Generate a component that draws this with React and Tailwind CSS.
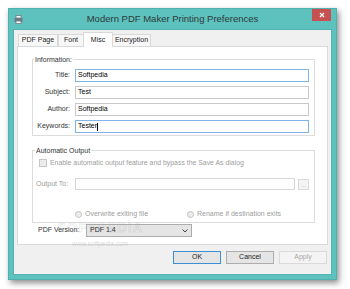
import React from "react";

function Printer() {
  return (
    <svg width="9" height="9" viewBox="0 0 9 9">
      <rect x="2" y="0.5" width="5" height="2.5" fill="#fff" stroke="#6d7b84" strokeWidth="0.8" />
      <rect x="0.5" y="3" width="8" height="4" fill="#6d7b84" />
      <rect x="2" y="6" width="5" height="2.5" fill="#fff" stroke="#6d7b84" strokeWidth="0.8" />
    </svg>
  );
}

function Row({ label, value, focus, caret }) {
  return (
    <div className="flex items-center h-[13px]">
      <div className="w-[36px] text-right text-[7px] text-[#333]">{label}</div>
      <div
        className={`ml-[5px] w-[234px] h-[13px] bg-white border flex items-center px-[2px] text-[7px] text-black ${
          focus ? "border-[#7eb4ea]" : "border-[#c9c9c9]"
        }`}
      >
        {value}
        {caret && <span className="inline-block w-px h-[8px] bg-black" />}
      </div>
    </div>
  );
}

function Radio({ label }) {
  return (
    <div className="flex items-center gap-[3px]">
      <span className="w-[7px] h-[7px] rounded-full border border-[#c3c3c3] bg-[#ececec]" />
      <span className="text-[7px] text-[#9d9d9d]">{label}</span>
    </div>
  );
}

function Button({ children, primary, disabled }) {
  return (
    <div
      className={`w-[48px] h-[13px] flex items-center justify-center text-[7px] border ${
        disabled
          ? "bg-[#f4f4f4] border-[#dadada] text-[#a8a8a8]"
          : primary
          ? "bg-[#e5e5e5] border-[#3c8fd6] text-[#222]"
          : "bg-[#e5e5e5] border-[#adadad] text-[#222]"
      }`}
    >
      {children}
    </div>
  );
}

export default function App() {
  const tabs = ["PDF Page", "Font", "Misc", "Encryption"];
  const widths = { "PDF Page": "w-[40px]", Font: "w-[26px]", Misc: "w-[30px]", Encryption: "w-[39px]" };

  return (
    <div className="w-[350px] h-[289px] bg-white overflow-hidden pt-[8px] pl-[8px] font-['Liberation_Sans',Arial,sans-serif]">
      <div className="w-[329px] h-[272px] bg-[#5dc1be] border border-[#4fb0ad] shadow-[2px_3px_6px_rgba(0,0,0,0.45)] flex flex-col">
        {/* title bar */}
        <div className="relative h-[20px] flex items-center pl-[5px] shrink-0">
          <Printer />
          <div className="absolute inset-x-0 top-[3px] text-center text-[9.5px] text-[#2d3a3a]">
            Modern PDF Maker Printing Preferences
          </div>
          <div className="absolute right-[5px] top-0 w-[19px] h-[12px] bg-[#c75050] flex items-center justify-center">
            <svg width="6" height="6" viewBox="0 0 6 6">
              <path d="M1 1 L5 5 M5 1 L1 5" stroke="#fff" strokeWidth="1.2" />
            </svg>
          </div>
        </div>

        {/* client */}
        <div className="mx-[4px] mb-[4px] flex-1 bg-[#f0f0f0] border border-[#52b3b0] flex flex-col pl-[3px] pt-[2px]">
          <div className="flex items-end h-[14px] pl-[1px] relative z-10">
            {tabs.map((t) => (
              <div
                key={t}
                className={`${widths[t]} flex items-center justify-center text-[7px] text-[#222] border border-[#d9d9d9] ${
                  t === "Misc"
                    ? "h-[15px] -mb-px bg-white border-b-0 -mx-[1px] px-[1px]"
                    : "h-[12px] bg-[#f7f7f7] border-b-0"
                }`}
              >
                {t}
              </div>
            ))}
          </div>

          <div className="relative w-[311px] h-[199px] bg-white border border-[#d9d9d9] pl-[14px] pt-[8px]">
            <fieldset className="w-[283px] border border-[#dcdcdc] pl-[1px] pb-[2px]">
              <legend className="px-[1px] text-[7px] text-[#333] leading-[9px]">Information:</legend>
              <div className="flex flex-col gap-[4px] mt-[5px]">
                <Row label="Title:" value="Softpedia" focus />
                <Row label="Subject:" value="Test" />
                <Row label="Author:" value="Softpedia" />
                <Row label="Keywords:" value="Tester" focus caret />
              </div>
            </fieldset>

            <fieldset className="mt-[10px] w-[283px] h-[77px] border border-[#dcdcdc] pl-[1px]">
              <legend className="ml-[1px] px-[1px] text-[7px] text-[#333] leading-[9px]">Automatic Output</legend>
              <div className="flex items-center gap-[3px] ml-[5px] mt-[3px]">
                <span className="w-[8px] h-[8px] border border-[#c6c6c6] bg-[#ececec]" />
                <span className="text-[6.9px] text-[#9d9d9d]">
                  Enable automatic output feature and bypass the Save As dialog
                </span>
              </div>
              <div className="flex items-center mt-[10px] h-[12px]">
                <div className="w-[36px] pl-[2px] text-[7px] text-[#9d9d9d]">Output To:</div>
                <div className="ml-[5px] w-[220px] h-[12px] bg-white border border-[#d9d9d9]" />
                <div className="ml-[3px] w-[11px] h-[11px] bg-[#f4f4f4] border border-[#d9d9d9] flex items-end justify-center text-[6px] leading-[7px] text-[#a0a0a0]">
                  ...
                </div>
              </div>
              <div className="flex items-center mt-[19px] pl-[41px]">
                <Radio label="Overwrite exiting file" />
                <div className="ml-[39px]">
                  <Radio label="Rename if destination exits" />
                </div>
              </div>
            </fieldset>

            <div className="flex items-center mt-[1px] h-[13px]">
              <div className="ml-[6px] w-[48px] text-[7px] text-[#333]">PDF Version:</div>
              <div className="w-[106px] h-[13px] bg-[#e5e5e5] border border-[#acacac] flex items-center justify-between px-[3px] text-[7px] text-[#222]">
                <span>PDF 1.4</span>
                <svg width="6" height="4" viewBox="0 0 6 4">
                  <path d="M0.5 0.5 L3 3 L5.5 0.5" stroke="#444" strokeWidth="1" fill="none" />
                </svg>
              </div>
            </div>

            {/* watermark */}
            <div className="absolute left-[39px] top-[174px] text-[13.5px] leading-[14px] font-bold tracking-[1px] text-transparent [-webkit-text-stroke:0.5px_rgba(160,160,160,0.35)] pointer-events-none">
              SOFTPEDIA
            </div>
            <div className="absolute left-[54px] top-[193px] text-[6.5px] leading-[7px] text-[rgba(150,150,150,0.35)] pointer-events-none">
              www.softpedia.com
            </div>
          </div>

          <div className="flex justify-end gap-[5px] mt-[6px] pr-[4px]">
            <Button primary>OK</Button>
            <Button>Cancel</Button>
            <Button disabled>Apply</Button>
          </div>
        </div>
      </div>
    </div>
  );
}
